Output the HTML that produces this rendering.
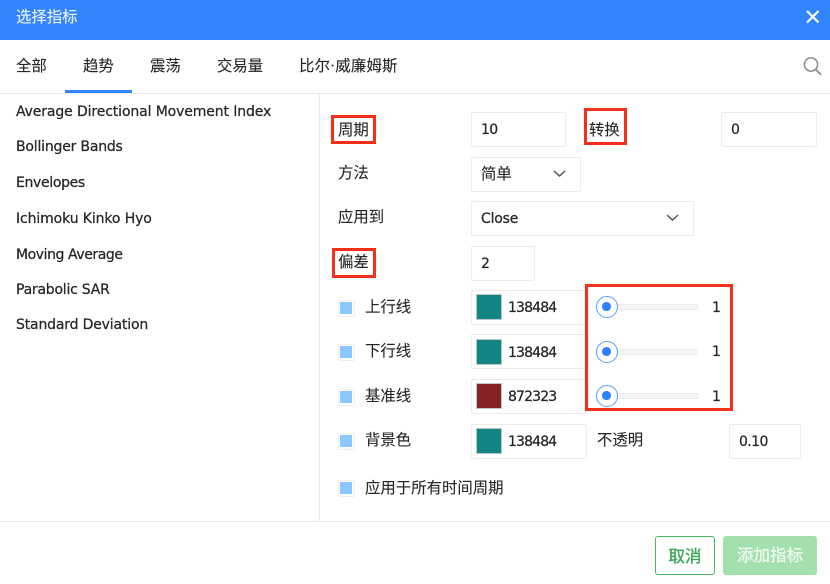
<!DOCTYPE html>
<html><head><meta charset="utf-8"><style>
html,body{margin:0;padding:0;background:#fff}
#r{position:relative;width:830px;height:584px;overflow:hidden;background:#fff;font-family:"DejaVu Sans","Noto Sans CJK SC",sans-serif;color:#262626;font-size:14px}
.t{position:absolute;white-space:nowrap;line-height:20px;height:20px;-webkit-text-stroke:.25px currentColor}
.c{font-size:15.4px;-webkit-text-stroke:.1px currentColor}
.b{position:absolute;box-sizing:border-box;border:1px solid #ececec;border-radius:2px;background:#fff}
.rb{position:absolute;box-sizing:border-box;border:3px solid #f5301a}
.cb{position:absolute;left:338px;width:17px;height:17px;box-sizing:border-box;border:1px solid #eee;border-radius:2px;background:#fff}
.cb i{position:absolute;left:1px;top:1px;width:12px;height:12px;background:#8cc8ff;display:block}
.sw{position:absolute;left:476px;width:26px;height:26px;box-sizing:border-box;border:1px solid #b9c9c8}
.th{position:absolute;left:596px;width:22px;height:22px;box-sizing:border-box;border:1.6px solid #5a9dff;border-radius:50%;background:#fff}
.th i{position:absolute;left:5px;top:5px;width:8.8px;height:8.8px;background:#2f80ff;border-radius:50%;display:block}
.tr{position:absolute;left:616px;width:82px;height:6px;box-sizing:border-box;border:1px solid #ececec;background:#f6f6f6}
.n{letter-spacing:-.85px}
</style></head><body><div id="r">
<div style="position:absolute;left:0;top:0;width:830px;height:40px;background:#3385ff"></div>
<div class="t c" style="left:16px;top:7px;color:#eef5ff">选择指标</div>
<svg style="position:absolute;left:801px;top:5px" width="24" height="24"><path d="M6 6L17.5 17.5M17.5 6L6 17.5" stroke="#fff" stroke-width="2.2" fill="none"/></svg>
<div class="t c" style="left:16px;top:56px">全部</div>
<div class="t c" style="left:83px;top:56px">趋势</div>
<div class="t c" style="left:150px;top:56px">震荡</div>
<div class="t c" style="left:217px;top:56px">交易量</div>
<div class="t c" style="left:299px;top:56px;letter-spacing:.2px">比尔·威廉姆斯</div>
<div style="position:absolute;left:65px;top:90px;width:67px;height:3px;background:#3385ff"></div>
<svg style="position:absolute;left:801px;top:55px" width="22" height="22"><circle cx="10" cy="9.5" r="6.6" stroke="#8a8a8a" stroke-width="1.5" fill="none"/><path d="M14.8 14.5L20 19.7" stroke="#8a8a8a" stroke-width="1.8" fill="none"/></svg>
<div style="position:absolute;left:0;top:93px;width:830px;height:1px;background:#e8e8e8"></div>
<div style="position:absolute;left:319px;top:94px;width:1px;height:427px;background:#e8e8e8"></div>
<div style="position:absolute;left:0;top:521px;width:830px;height:1px;background:#e8e8e8"></div>

<div class="t" style="left:16px;top:102px;letter-spacing:-.12px">Average Directional Movement Index</div>
<div class="t" style="left:16px;top:137px;letter-spacing:-.2px">Bollinger Bands</div>
<div class="t" style="left:16px;top:173px;letter-spacing:-.33px">Envelopes</div>
<div class="t" style="left:16px;top:209px;letter-spacing:-.11px">Ichimoku Kinko Hyo</div>
<div class="t" style="left:16px;top:245px;letter-spacing:-.43px">Moving Average</div>
<div class="t" style="left:16px;top:280px;letter-spacing:-.23px">Parabolic SAR</div>
<div class="t" style="left:16px;top:315px;letter-spacing:-.17px">Standard Deviation</div>

<div class="rb" style="left:331px;top:115px;width:45px;height:29px"></div>
<div class="t c" style="left:338px;top:120px">周期</div>
<div class="b" style="left:471px;top:112px;width:95px;height:35px"></div>
<div class="t" style="left:481px;top:120px;letter-spacing:-.6px">10</div>
<div class="rb" style="left:584px;top:108px;width:43px;height:37px"></div>
<div class="t c" style="left:589px;top:120px">转换</div>
<div class="b" style="left:721px;top:112px;width:96px;height:35px"></div>
<div class="t" style="left:731px;top:120px">0</div>

<div class="t c" style="left:338px;top:163px">方法</div>
<div class="b" style="left:471px;top:157px;width:110px;height:35px"></div>
<div class="t c" style="left:481px;top:164px">简单</div>
<svg style="position:absolute;left:552px;top:169px" width="16" height="10"><path d="M2 2L7.5 7L13 2" stroke="#5a5350" stroke-width="1.5" fill="none"/></svg>

<div class="t c" style="left:338px;top:207px">应用到</div>
<div class="b" style="left:471px;top:201px;width:223px;height:35px"></div>
<div class="t" style="left:481px;top:209px;letter-spacing:-.2px">Close</div>
<svg style="position:absolute;left:665px;top:213px" width="16" height="10"><path d="M2 2L7.5 7L13 2" stroke="#5a5350" stroke-width="1.5" fill="none"/></svg>

<div class="rb" style="left:332px;top:248px;width:44px;height:30px"></div>
<div class="t c" style="left:338px;top:252px">偏差</div>
<div class="b" style="left:471px;top:246px;width:64px;height:35px"></div>
<div class="t" style="left:481px;top:254px">2</div>

<div class="cb" style="top:300px"><i></i></div>
<div class="t c" style="left:365px;top:297px">上行线</div>
<div class="b" style="left:471px;top:290px;width:116px;height:35px"></div>
<div class="sw" style="top:294px;background:#138484"></div>
<div class="t n" style="left:508px;top:298px">138484</div>

<div class="cb" style="top:344px"><i></i></div>
<div class="t c" style="left:365px;top:341px">下行线</div>
<div class="b" style="left:471px;top:334px;width:116px;height:35px"></div>
<div class="sw" style="top:339px;background:#138484"></div>
<div class="t n" style="left:508px;top:343px">138484</div>

<div class="cb" style="top:389px"><i></i></div>
<div class="t c" style="left:365px;top:386px">基准线</div>
<div class="b" style="left:471px;top:379px;width:116px;height:35px"></div>
<div class="sw" style="top:383px;background:#872323"></div>
<div class="t n" style="left:508px;top:387px">872323</div>

<div class="cb" style="top:433px"><i></i></div>
<div class="t c" style="left:365px;top:430px">背景色</div>
<div class="b" style="left:471px;top:424px;width:116px;height:35px"></div>
<div class="sw" style="top:428px;background:#138484"></div>
<div class="t n" style="left:508px;top:432px">138484</div>
<div class="t c" style="left:597px;top:430px">不透明</div>
<div class="b" style="left:729px;top:424px;width:72px;height:35px"></div>
<div class="t" style="left:739px;top:432px;letter-spacing:-.6px">0.10</div>

<div class="cb" style="top:480px"><i></i></div>
<div class="t c" style="left:365px;top:478px">应用于所有时间周期</div>

<div class="rb" style="left:585px;top:284px;width:148px;height:127px"></div>
<div class="tr" style="top:304px"></div><div class="th" style="top:296px"><i></i></div><div class="t" style="left:712px;top:298px">1</div>
<div class="tr" style="top:349px"></div><div class="th" style="top:341px"><i></i></div><div class="t" style="left:712px;top:342px">1</div>
<div class="tr" style="top:393px"></div><div class="th" style="top:385px"><i></i></div><div class="t" style="left:712px;top:387px">1</div>

<div style="position:absolute;left:655px;top:536px;width:60px;height:39px;box-sizing:border-box;border:1px solid #4cb865;border-radius:3px;background:#fff;color:#3ca655;font-size:16.5px;line-height:39px;text-align:center;-webkit-text-stroke:.35px currentColor">取消</div>
<div style="position:absolute;left:723px;top:536px;width:94px;height:39px;box-sizing:border-box;border-radius:3px;background:#a3e0ae;color:#eef9f0;font-size:16.5px;line-height:40px;text-align:center;-webkit-text-stroke:.35px currentColor">添加指标</div>
</div></body></html>
